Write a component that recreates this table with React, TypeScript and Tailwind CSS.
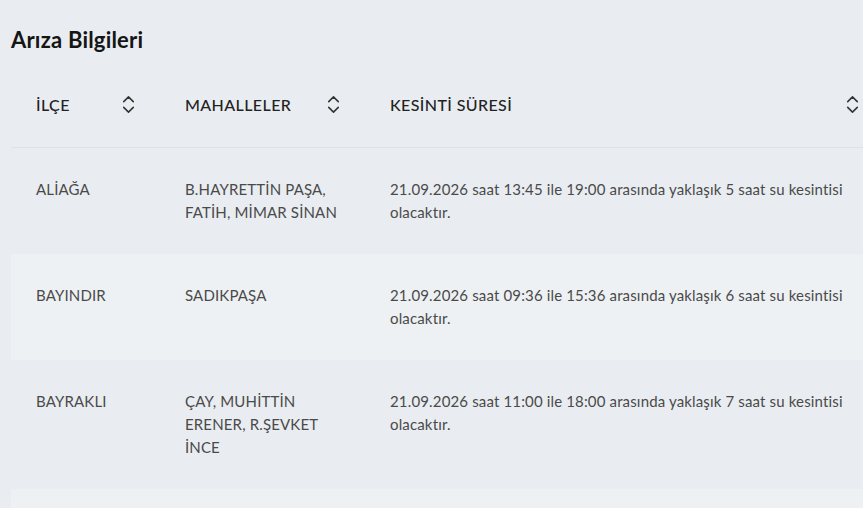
import { ChevronsUpDown } from "lucide-react"

const rows = [
  {
    ilce: "ALİAĞA",
    mahalle: "B.HAYRETTİN PAŞA, FATİH, MİMAR SİNAN",
    sure: "21.09.2026 saat 13:45 ile 19:00 arasında yaklaşık 5 saat su kesintisi olacaktır.",
  },
  {
    ilce: "BAYINDIR",
    mahalle: "SADIKPAŞA",
    sure: "21.09.2026 saat 09:36 ile 15:36 arasında yaklaşık 6 saat su kesintisi olacaktır.",
  },
  {
    ilce: "BAYRAKLI",
    mahalle: "ÇAY, MUHİTTİN ERENER, R.ŞEVKET İNCE",
    sure: "21.09.2026 saat 11:00 ile 18:00 arasında yaklaşık 7 saat su kesintisi olacaktır.",
  },
]

function HeaderCell({ label }: { label: string }) {
  return (
    <th className="px-[25px] py-[31px] text-left text-[16px] font-medium leading-[22px] tracking-[0.4px]">
      <div className="flex items-center justify-between">
        <span>{label}</span>
        <ChevronsUpDown size={23} strokeWidth={1.6} className="-mr-[5px] text-[#333]" />
      </div>
    </th>
  )
}

export default function App() {
  return (
    <div className="h-[508px] w-[863px] overflow-hidden bg-[#e9edf1] font-['Lato','Noto_Sans',sans-serif] text-[15px] leading-[23px] text-[#222]">
      <h2 className="px-[11px] pt-[28px] text-[22px] font-bold leading-[24px] tracking-[0.2px] text-[#151515]">
        Arıza Bilgileri
      </h2>

      <div className="mt-[10px] pl-[11px]">
        <table className="w-[873px] table-fixed border-collapse">
          <colgroup>
            <col className="w-[149px]" />
            <col className="w-[205px]" />
            <col />
          </colgroup>
          <thead>
            <tr className="border-b border-[#dde2e7]">
              <HeaderCell label="İLÇE" />
              <HeaderCell label="MAHALLELER" />
              <HeaderCell label="KESİNTİ SÜRESİ" />
            </tr>
          </thead>
          <tbody className="tracking-[0.15px] text-[#4a4a4a]">
            {rows.map((r, i) => (
              <tr key={r.ilce} className={i % 2 === 1 ? "bg-[#eef1f4]" : ""}>
                <td className="px-[25px] py-[30px] align-top">{r.ilce}</td>
                <td className="px-[25px] py-[30px] align-top">{r.mahalle}</td>
                <td className="py-[30px] pl-[25px] pr-[30px] align-top">{r.sure}</td>
              </tr>
            ))}
            {/* next row, only its top edge is in view */}
            <tr className="bg-[#eef1f4]">
              <td colSpan={3} className="h-[60px]" />
            </tr>
          </tbody>
        </table>
      </div>
    </div>
  )
}
